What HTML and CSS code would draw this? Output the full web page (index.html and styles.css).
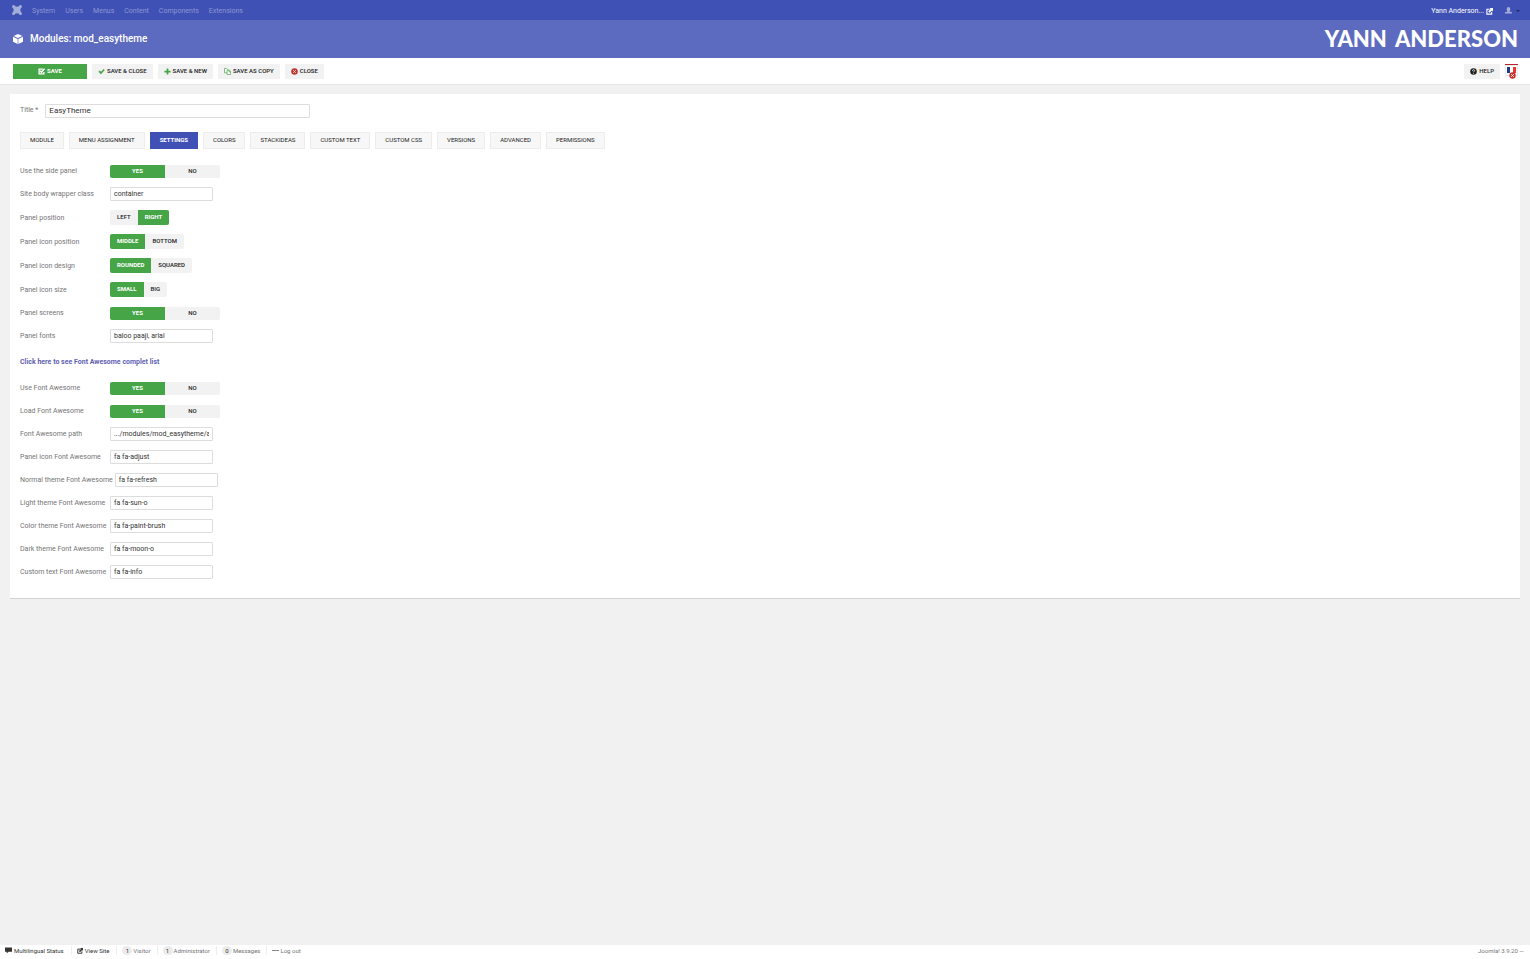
FILE: index.html
```html
<!DOCTYPE html>
<html lang="en">
<head>
<meta charset="utf-8">
<title>Modules: mod_easytheme</title>
<link rel="stylesheet" href="styles.css">
</head>
<body>
<svg class="sprite" aria-hidden="true">
  <symbol id="i-edit" viewBox="0 0 16 16"><path fill="none" stroke="currentColor" stroke-width="3" d="M11 2.500H2.500v11h11V9"/><path fill="none" stroke="currentColor" stroke-width="3.500" d="M5 6.500l3 3 7-8"/></symbol>
  <symbol id="i-check" viewBox="0 0 16 16"><path d="M1 8.500l3-3 2.800 2.800L13 2l2.500 2.500L6.800 14z"/></symbol>
  <symbol id="i-plus" viewBox="0 0 16 16"><path d="M6 1h4v5h5v4h-5v5H6v-5H1V6h5z"/></symbol>
  <symbol id="i-copy" viewBox="0 0 16 16"><path fill="#fff" stroke="currentColor" stroke-width="1.600" d="M1 1h5l3 3v7H1z"/><path fill="#fff" stroke="currentColor" stroke-width="1.600" d="M7 5h5l3 3v7H7zM11.500 5v3.500H15"/></symbol>
  <symbol id="i-cancel" viewBox="0 0 16 16"><circle cx="8" cy="8" r="7.500"/><path stroke="#f2f2f2" stroke-width="1.800" d="M5 5l6 6M11 5l-6 6"/></symbol>
  <symbol id="i-help" viewBox="0 0 16 16"><circle cx="8" cy="8" r="7.500"/><path fill="none" stroke="#fff" stroke-width="1.800" d="M5.500 6.500c0-3.500 5-3.500 5-.5 0 1.600-2.500 1.600-2.500 3.500M8 11v2"/></symbol>
  <symbol id="i-out" viewBox="0 0 16 16"><path fill="none" stroke="currentColor" stroke-width="2.500" d="M8 3H2v11h11V9"/><path d="M8 0h8v8l-2.500-2.500L8 11 5 8l5.500-5.500z"/></symbol>
  <symbol id="i-cube" viewBox="0 0 16 16"><path d="M8 0l7 3-7 3.400L1 3zM0 4.200L7.500 7.800V16L0 12.400zM16 4.200L8.500 7.800V16l7.500-3.600z"/></symbol>
  <symbol id="i-user" viewBox="0 0 16 16"><ellipse cx="8" cy="5" rx="4" ry="5"/><path d="M6 8h4v2.500l6 1.500v3H0v-3l6-1.500z"/></symbol>
  <symbol id="i-joomla" viewBox="0 0 16 16"><path fill="none" stroke="currentColor" stroke-width="3.400" d="M3 3l10 10M13 3L3 13M3 3Q8 6 13 3M3 13Q8 10 13 13M3 3Q6 8 3 13M13 3Q10 8 13 13"/><circle cx="2.500" cy="2.500" r="2.400"/><circle cx="13.500" cy="2.500" r="2.400"/><circle cx="2.500" cy="13.500" r="2.400"/><circle cx="13.500" cy="13.500" r="2.400"/></symbol>
  <symbol id="i-comment" viewBox="0 0 16 16"><path d="M0 1h16v10H8l-4 4v-4H0z"/></symbol>
</svg>

<nav class="topbar">
  <a class="brand" href="#" aria-label="Joomla"><svg class="ico-l"><use href="#i-joomla"/></svg></a>
  <a class="menu" href="#">System</a>
  <a class="menu" href="#">Users</a>
  <a class="menu" href="#">Menus</a>
  <a class="menu" href="#">Content</a>
  <a class="menu" href="#">Components</a>
  <a class="menu" href="#">Extensions</a>
  <a class="site" href="#">Yann Anderson...<svg class="ico-m"><use href="#i-out"/></svg></a>
  <button class="user" type="button" aria-label="User menu"><svg class="ico-m"><use href="#i-user"/></svg><span class="caret"></span></button>
</nav>

<header class="header">
  <svg class="ico-l"><use href="#i-cube"/></svg>
  <h1 class="page-title">Modules: mod_easytheme</h1>
  <div class="logo"><span>YANN</span><span>ANDERSON</span></div>
</header>

<div class="toolbar">
  <button class="btn save" type="button"><svg class="ico-m"><use href="#i-edit"/></svg>SAVE</button>
  <button class="btn" type="button"><svg class="ico-m green"><use href="#i-check"/></svg>SAVE &amp; CLOSE</button>
  <button class="btn" type="button"><svg class="ico-m green"><use href="#i-plus"/></svg>SAVE &amp; NEW</button>
  <button class="btn" type="button"><svg class="ico-m green"><use href="#i-copy"/></svg>SAVE AS COPY</button>
  <button class="btn" type="button"><svg class="ico-m red"><use href="#i-cancel"/></svg>CLOSE</button>
  <button class="btn help" type="button"><svg class="ico-m"><use href="#i-help"/></svg>HELP</button>
  <a class="lang" href="#" aria-label="Language">
    <svg class="flag" viewBox="0 0 13 15"><path fill="#b8232f" d="M0 0h13v1H0z"/><path fill="#fff" stroke="#ddd" stroke-width=".6" d="M.5 1.500h12v10H.5z"/><path fill="#1f3a86" d="M2 3h3v6H2z"/><path fill="#e33" d="M8 3h3v6H8z"/><circle cx="7.500" cy="11.500" r="3.200" fill="#c9302c"/><path stroke="#fff" stroke-width=".9" d="M6.200 10.200l2.600 2.600M8.800 10.200l-2.600 2.600"/></svg>
  </a>
</div>

<main class="card">
  <div class="title-row">
    <label for="title">Title *</label>
    <input class="text title-input" id="title" value="EasyTheme">
  </div>

  <div class="tabs" role="tablist">
    <button class="tab" type="button" role="tab">MODULE</button>
    <button class="tab" type="button" role="tab">MENU ASSIGNMENT</button>
    <button class="tab active" type="button" role="tab" aria-selected="true">SETTINGS</button>
    <button class="tab" type="button" role="tab">COLORS</button>
    <button class="tab" type="button" role="tab">STACKIDEAS</button>
    <button class="tab" type="button" role="tab">CUSTOM TEXT</button>
    <button class="tab" type="button" role="tab">CUSTOM CSS</button>
    <button class="tab" type="button" role="tab">VERSIONS</button>
    <button class="tab" type="button" role="tab">ADVANCED</button>
    <button class="tab" type="button" role="tab">PERMISSIONS</button>
  </div>

  <form class="fields">
    <div class="row" role="radiogroup" aria-labelledby="l1"><span class="label" id="l1">Use the side panel</span><div class="switch wide"><label class="opt"><input type="radio" name="side" checked>YES</label><label class="opt"><input type="radio" name="side">NO</label></div></div>
    <div class="row"><label class="label" for="wrap">Site body wrapper class</label><input class="text" id="wrap" value="container"></div>
    <div class="row" role="radiogroup" aria-labelledby="l2"><span class="label" id="l2">Panel position</span><div class="switch"><label class="opt"><input type="radio" name="pos">LEFT</label><label class="opt"><input type="radio" name="pos" checked>RIGHT</label></div></div>
    <div class="row" role="radiogroup" aria-labelledby="l3"><span class="label" id="l3">Panel icon position</span><div class="switch"><label class="opt"><input type="radio" name="ipos" checked>MIDDLE</label><label class="opt"><input type="radio" name="ipos">BOTTOM</label></div></div>
    <div class="row" role="radiogroup" aria-labelledby="l4"><span class="label" id="l4">Panel icon design</span><div class="switch"><label class="opt"><input type="radio" name="des" checked>ROUNDED</label><label class="opt"><input type="radio" name="des">SQUARED</label></div></div>
    <div class="row" role="radiogroup" aria-labelledby="l5"><span class="label" id="l5">Panel icon size</span><div class="switch"><label class="opt"><input type="radio" name="size" checked>SMALL</label><label class="opt"><input type="radio" name="size">BIG</label></div></div>
    <div class="row" role="radiogroup" aria-labelledby="l6"><span class="label" id="l6">Panel screens</span><div class="switch wide"><label class="opt"><input type="radio" name="scr" checked>YES</label><label class="opt"><input type="radio" name="scr">NO</label></div></div>
    <div class="row"><label class="label" for="fonts">Panel fonts</label><input class="text" id="fonts" value="baloo paaji, arial"></div>
    <a class="list-link" href="#">Click here to see Font Awesome complet list</a>
    <div class="row" role="radiogroup" aria-labelledby="l7"><span class="label" id="l7">Use Font Awesome</span><div class="switch wide"><label class="opt"><input type="radio" name="ufa" checked>YES</label><label class="opt"><input type="radio" name="ufa">NO</label></div></div>
    <div class="row" role="radiogroup" aria-labelledby="l8"><span class="label" id="l8">Load Font Awesome</span><div class="switch wide"><label class="opt"><input type="radio" name="lfa" checked>YES</label><label class="opt"><input type="radio" name="lfa">NO</label></div></div>
    <div class="row"><label class="label" for="path">Font Awesome path</label><input class="text" id="path" value=".../modules/mod_easytheme/a"></div>
    <div class="row"><label class="label" for="f1">Panel icon Font Awesome</label><input class="text" id="f1" value="fa fa-adjust"></div>
    <div class="row"><label class="label" for="f2">Normal theme Font Awesome</label><input class="text" id="f2" value="fa fa-refresh"></div>
    <div class="row"><label class="label" for="f3">Light theme Font Awesome</label><input class="text" id="f3" value="fa fa-sun-o"></div>
    <div class="row"><label class="label" for="f4">Color theme Font Awesome</label><input class="text" id="f4" value="fa fa-paint-brush"></div>
    <div class="row"><label class="label" for="f5">Dark theme Font Awesome</label><input class="text" id="f5" value="fa fa-moon-o"></div>
    <div class="row"><label class="label" for="f6">Custom text Font Awesome</label><input class="text" id="f6" value="fa fa-info"></div>
  </form>
</main>

<footer class="status">
  <a class="item dark" href="#"><svg class="ico-m"><use href="#i-comment"/></svg>Multilingual Status</a>
  <a class="item dark" href="#"><svg class="ico-s"><use href="#i-out"/></svg>View Site</a>
  <span class="item"><span class="badge">1</span>Visitor</span>
  <span class="item"><span class="badge">1</span>Administrator</span>
  <a class="item" href="#"><span class="badge">0</span>Messages</a>
  <a class="item" href="#"><span class="dash"></span>Log out</a>
  <span class="version">Joomla! 3.9.20 —</span>
</footer>
</body>
</html>
```
FILE: styles.css
```css
* { box-sizing: border-box; }
body {
  margin: 0;
  min-height: 100vh;
  display: flex;
  flex-direction: column;
  background: #f1f1f1;
  color: #757575;
  font: 7px/10px Roboto, "Liberation Sans", sans-serif;
}
a { color: inherit; text-decoration: none; }
button, input { font: inherit; color: inherit; }
svg { fill: currentColor; flex: none; }
.sprite { position: absolute; width: 0; height: 0; }
.ico-s { width: 6px; height: 6px; }
.ico-m { width: 7px; height: 7px; }
.ico-l { width: 10px; height: 10px; }
.green { color: #46a546; }
.red { color: #bd362f; }

.topbar {
  display: flex;
  align-items: center;
  gap: 10px;
  height: 20px;
  padding: 0 10px 0 12px;
  background: #3f51b5;
  color: #8c97d3;
}
.brand { display: flex; color: #a5aedb; }
.menu, .site { padding-top: 2px; }
.site { display: flex; align-items: center; gap: 2px; margin-left: auto; color: #fff; }
.user {
  display: flex;
  align-items: center;
  gap: 4px;
  padding: 0;
  margin-left: 2px;
  border: 0;
  background: none;
  color: #a5aedb;
}
.caret { margin-top: 2px; border: 2px solid transparent; border-top-color: #1c2766; border-bottom: 0; }

.header {
  display: flex;
  align-items: center;
  gap: 7px;
  height: 38px;
  padding: 0 12px 0 13px;
  background: #5c6bc0;
  color: #fff;
}
.page-title { margin: 0; font-size: 10px; line-height: 14px; font-weight: 500; }
.logo { display: flex; gap: 8px; margin-left: auto; font: 900 22px/28px Lato, sans-serif; }

.toolbar {
  display: flex;
  align-items: center;
  gap: 5px;
  height: 27px;
  padding: 0 12px 0 13px;
  background: #fff;
  border-bottom: 1px solid #e6e6e6;
}
.btn {
  display: flex;
  align-items: center;
  justify-content: center;
  gap: 2px;
  height: 15px;
  padding: 0 6px;
  border: 0;
  background: #f2f2f2;
  color: #212121;
  font-size: 6px;
  font-weight: 500;
}
.save { width: 74px; background: #46a546; color: #fff; font-weight: 700; }
.help { margin-left: auto; }
.lang { display: flex; }
.flag { width: 13px; height: 15px; }

.card {
  margin: 9px 10px 0;
  padding: 10px 10px 19px;
  background: #fff;
  border-bottom: 1px solid #d2d2d2;
}
.text {
  width: 103px;
  height: 14px;
  padding: 0 3px;
  border: 1px solid #ddd;
  border-radius: 1px;
  background: #fff;
  color: #333;
}
.title-row { display: flex; gap: 7px; align-items: center; }
.title-row label { padding-bottom: 2px; }
.title-input { width: 265px; padding-bottom: 2px; font-size: 8px; }

.tabs { display: flex; gap: 5px; margin: 14px 0 15px; }
.tab {
  height: 17px;
  padding: 0 9px 2px;
  border: 1px solid #ececec;
  background: #f7f7f7;
  color: #212121;
  font-size: 6px;
}
.active { background: #3f51b5; border-color: #3f51b5; color: #fff; font-weight: 700; }

.fields { display: flex; flex-direction: column; align-items: flex-start; gap: 9px; }
.row { display: flex; gap: 2px; align-items: center; }
.label { min-width: 88px; white-space: nowrap; }
.switch { display: flex; border-radius: 2px; overflow: hidden; background: #f2f2f2; }
.opt {
  position: relative;
  height: 15px;
  padding: 0 7px;
  color: #212121;
  font-size: 6px;
  font-weight: 500;
  line-height: 13px;
  text-align: center;
}
.opt:has(:checked) { background: #46a546; color: #fff; font-weight: 700; }
.opt input { position: absolute; inset: 0; margin: 0; opacity: 0; }
.wide { margin-top: 1px; }
.wide .opt { width: 55px; height: 13px; line-height: 11px; }
.list-link { color: #5f5fb0; font-weight: 700; line-height: 20px; }

.status {
  display: flex;
  align-items: center;
  height: 14px;
  margin-top: auto;
  padding: 0 6px 3px 5px;
  background: #fff;
  font-size: 6px;
}
.item { display: flex; align-items: center; gap: 1px; padding-right: 6px; margin-right: 5px; border-right: 1px solid #eee; line-height: 9px; }
.item:nth-last-child(2) { border: 0; }
.dark { gap: 2px; padding-right: 7px; color: #333; }
.badge { width: 10px; border-radius: 5px; background: #ebebeb; color: #333; text-align: center; }
.dash { width: 7px; height: 1px; background: #888; }
.version { margin-left: auto; }
```
